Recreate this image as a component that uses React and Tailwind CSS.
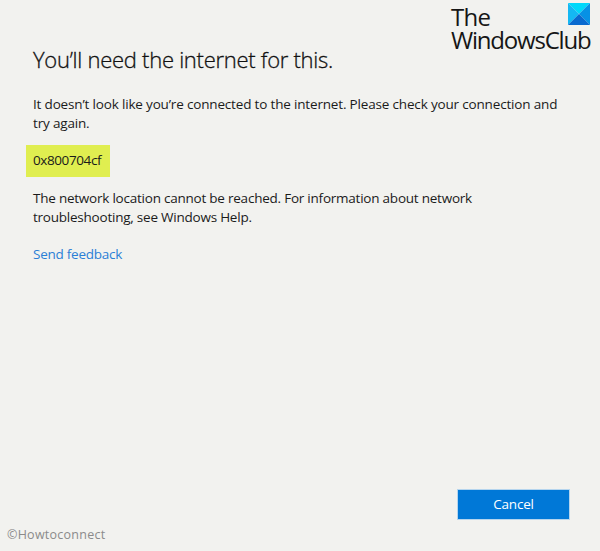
function ClubLogo() {
  return (
    <svg viewBox="0 0 22 22" className="h-[22px] w-[22px]" aria-hidden="true">
      <path d="M0 0H22L11 11Z" fill="#00d8fa" />
      <path d="M0 0L11 11L0 22Z" fill="#14b8f3" />
      <path d="M22 0V22L11 11Z" fill="#0791e5" />
      <path d="M0 22L11 11L22 22Z" fill="#0869cf" />
    </svg>
  );
}

function Brand() {
  return (
    <div className="absolute top-[3px] left-[451px] w-[141px] text-[24px] leading-[23px] text-[#161616]">
      <div className="flex justify-between pr-[2px]">
        <span className="pt-[2px] tracking-[-0.7px]">The</span>
        <ClubLogo />
      </div>
      <div className="whitespace-nowrap tracking-[-1.2px]">WindowsClub</div>
    </div>
  );
}

export default function App() {
  return (
    <main className="relative flex h-[551px] w-[600px] flex-col overflow-hidden bg-[#f2f2ef] pl-[33px] font-['Open_Sans','Noto_Sans',sans-serif] text-[13.5px] leading-[19px] text-[#1b1b1b]">
      <Brand />
      <h1 className="mt-[43px] text-[22px] leading-8 font-light whitespace-nowrap tracking-[-0.27px] text-[#111] [-webkit-text-stroke:0.3px_#111]">You’ll need the internet for this.</h1>
      <p className="mt-[20px] whitespace-nowrap tracking-[-0.17px]">
        It doesn’t look like you’re connected to the internet. Please check your connection and
        <br />
        try again.
      </p>
      <div className="mt-[12px] -ml-[7px] flex h-8 w-[84px] items-center bg-[#e0ee50] pb-[2px] pl-[7px] tracking-[-0.4px]">0x800704cf</div>
      <p className="mt-[12px] whitespace-nowrap tracking-[-0.23px]">
        The network location cannot be reached. For information about network
        <br />
        troubleshooting, see Windows Help.
      </p>
      <a className="mt-[18px] self-start tracking-[-0.25px] text-[#2b7fd6]">Send feedback</a>
      <button className="mt-auto mr-[30px] h-[31px] w-[113px] self-end border border-[#b5d5ee] bg-[#0078d7] tracking-[-0.2px] text-white">Cancel</button>
      <footer className="mt-[6px] mb-[8px] -ml-[26px] text-[12.5px] leading-[17px] tracking-[0.25px] text-[#8b8b8b]">©Howtoconnect</footer>
    </main>
  );
}
